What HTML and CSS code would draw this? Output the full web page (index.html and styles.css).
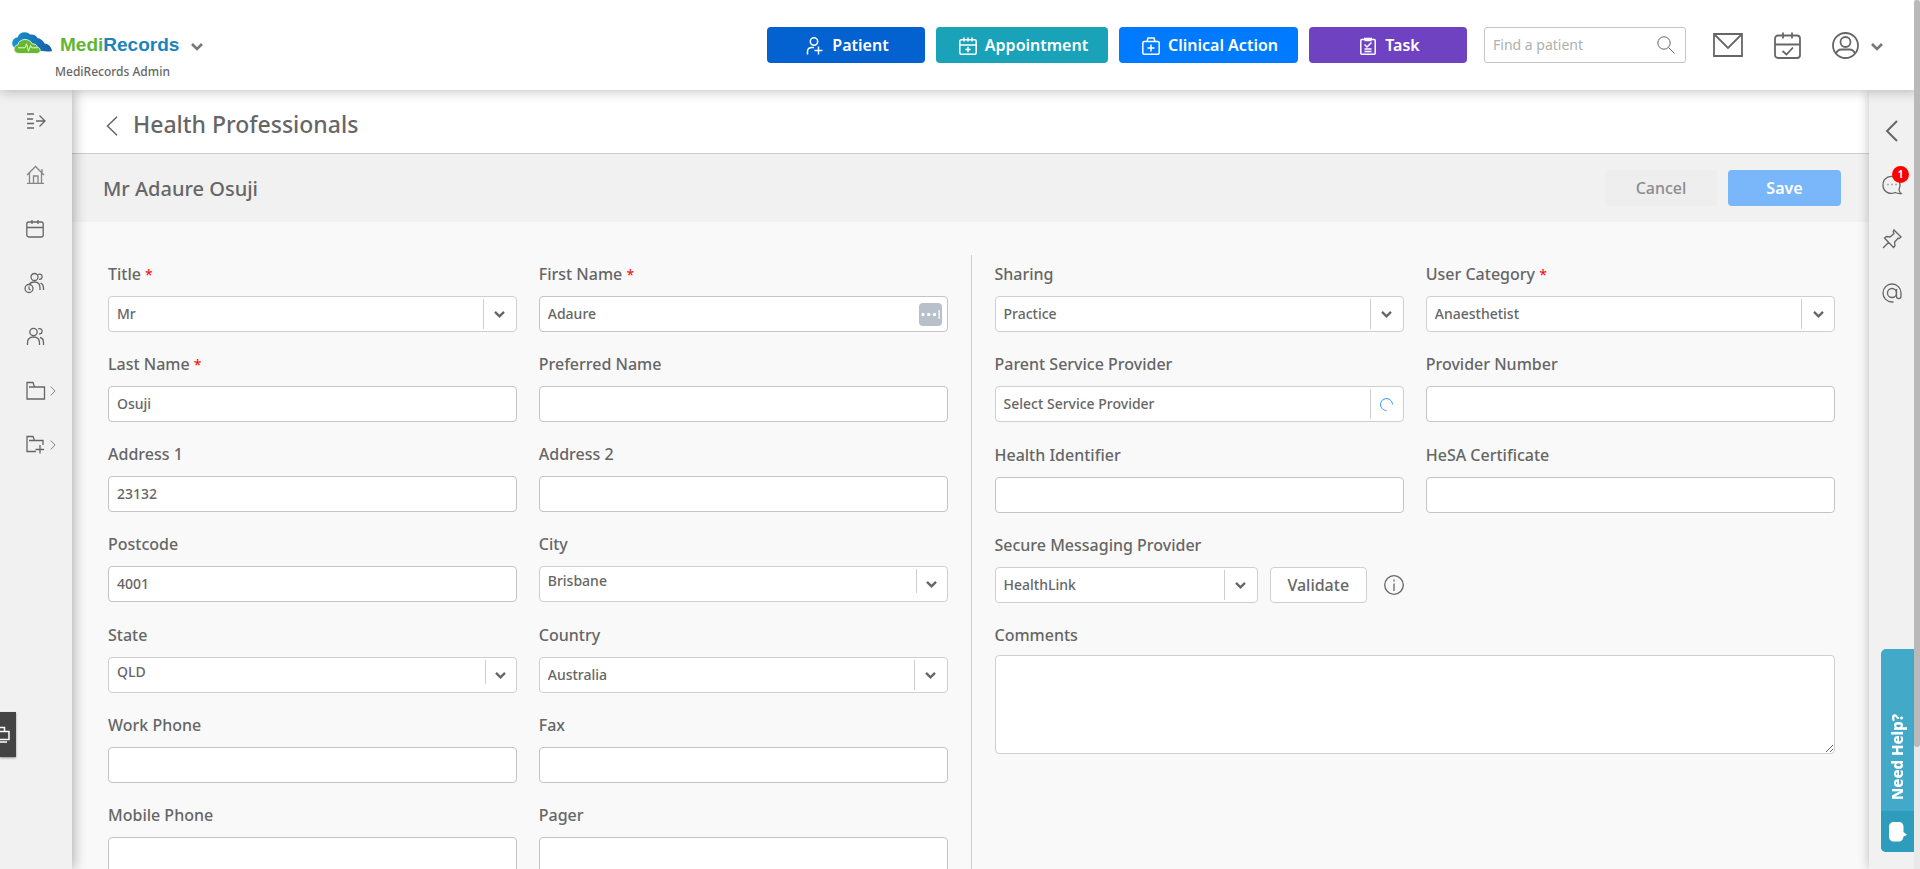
FILE: index.html
```html
<!DOCTYPE html>
<html lang="en">
<head>
  <meta charset="UTF-8" />
  <meta name="viewport" content="width=device-width, initial-scale=1.0"/>
  <title>MediRecords - Health Professionals</title>
  <link rel="stylesheet" href="styles.css">
</head>
<body>

  <!-- Shared icons -->
  <svg class="icon-defs" aria-hidden="true">
    <symbol id="chevron" viewBox="0 0 14 10"><path d="M2 2l5 5 5-5" fill="none" stroke="currentColor" stroke-width="2.6"/></symbol>
    <symbol id="arrow-right" viewBox="0 0 6 12"><path d="M.7 1.500L5 6 .7 10.500" fill="none" stroke="currentColor" stroke-width="1"/></symbol>
  </svg>

  <div class="app">
    <header class="topbar">
      <div class="brand">
        <button class="brand-name" type="button">
          <svg class="logo" viewBox="0 0 40 22" aria-hidden="true">
            <defs>
              <linearGradient id="cloudBlue" x1="0" x2="1"><stop offset="0" stop-color="#1793d1"/><stop offset="1" stop-color="#145fa5"/></linearGradient>
            </defs>
            <path d="M6 17C1 16 0 13 .3 10.500 .6 7.500 3 5.500 5.500 5.500 6.500 2 9.500.3 12.500.3c2.500 0 4 .8 5.500 2.200 3-.5 6 .5 7.500 3.500 3.500.8 5.500 2.500 7 5.500 4 .3 7 3.500 7.500 7.500-3 .8-7 .5-10 0z" fill="url(#cloudBlue)"/>
            <path d="M7 21.500c-3 0-5-1.800-5-4.300 0-2.300 1.600-4 3.800-4.300C6.500 9.500 9.500 7.500 13 7.500c3.300 0 6 1.600 7.200 4.400 2.800-.3 4.600 1 5 3.300 1.800.2 3 1.500 3 3.200 0 2-1.400 3.100-3.500 3.100z" fill="#67b72f" stroke="#fff" stroke-width=".8"/>
            <path d="M6 15.800h7l1.500-4 2 7.500 2-6 1.200 2.500H26" fill="none" stroke="#e8f7dc" stroke-width="1"/>
          </svg>
          <span><span class="medi">Medi</span><span class="records">Records</span></span>
          <svg class="caret" aria-hidden="true"><use href="#chevron"/></svg>
        </button>
        <div class="brand-sub">MediRecords Admin</div>
      </div>

      <div class="actions">
        <button class="btn btn-patient" type="button">
          <svg viewBox="0 0 18 18" aria-hidden="true"><circle cx="8" cy="4.500" r="3.700"/><path d="M1.500 17.500v-3c0-2.500 1.700-4 4.500-4h2M12.500 9.500v8M8.500 13.500h8"/></svg>
          Patient
        </button>
        <button class="btn btn-appointment" type="button">
          <svg viewBox="0 0 18 18" aria-hidden="true"><rect x=".8" y="2.800" width="16.400" height="14.500" rx="1.500"/><path d="M1 8h16M5 .5v4M9 .5v4M13 .5v4M9 9.800v5.400M6.300 12.500h5.400"/></svg>
          Appointment
        </button>
        <button class="btn btn-clinical" type="button">
          <svg viewBox="0 0 18 18" aria-hidden="true"><rect x=".8" y="4.500" width="16.400" height="12.700" rx="1.500"/><path d="M5 4.500l1-3.500h6l1 3.500M9 7.500v7M5.500 11h7"/></svg>
          Clinical Action
        </button>
        <button class="btn btn-task" type="button">
          <svg viewBox="0 0 18 18" aria-hidden="true"><rect x="1.800" y="2.500" width="14.400" height="14.700" rx="1"/><path d="M5 1.500h8M5.500 3.500h7M5.500 7.500l2.500 2.500 4.500-4.500M5.500 12h7M5.500 14.500h7"/></svg>
          Task
        </button>
      </div>

      <div class="search">
        <input type="text" placeholder="Find a patient" aria-label="Find a patient">
        <svg viewBox="0 0 18 18" aria-hidden="true"><circle cx="7" cy="7" r="6.200"/><path d="M11.500 11.500l6 6"/></svg>
      </div>

      <nav class="user-nav">
        <a href="#" aria-label="Messages">
          <svg width="30" height="24" viewBox="0 0 30 24"><path d="M1 1h28v22H1zM1.500 1.500L15 15 28.500 1.500"/></svg>
        </a>
        <a href="#" aria-label="Tasks">
          <svg width="27" height="27" viewBox="0 0 27 27"><rect x="1" y="3.500" width="25" height="22.500" rx="3"/><path d="M1 12.500h25M9 .5v6M18 .5v6M8.500 19l4 3.500 6.500-7"/></svg>
        </a>
        <a href="#" aria-label="Account" class="account">
          <svg width="27" height="27" viewBox="0 0 27 27"><circle cx="13.500" cy="13.500" r="12.500"/><circle cx="13.500" cy="10" r="5"/><path d="M4 21.500c1-2.500 3-4 5.500-4h8c2.500 0 4.500 1.500 5.500 4"/></svg>
          <svg class="caret" aria-hidden="true"><use href="#chevron"/></svg>
        </a>
      </nav>
    </header>

    <div class="body">
      <nav class="sidebar">
        <a href="#" aria-label="Expand menu">
          <svg viewBox="0 0 20 20"><path d="M1 3h7M1 8h6M1 12.500h7M1 17h7M10 10h9M13.500 4.500L19 10l-5.500 5.500"/></svg>
        </a>
        <a href="#" aria-label="Home" class="light">
          <svg viewBox="0 0 20 20"><path d="M1 10l8.500-8.500L18 10M3.500 8v10M15.500 8v10M1 18.300h17M7.500 18v-7h4.500v7M16 4v4"/></svg>
        </a>
        <a href="#" aria-label="Calendar">
          <svg viewBox="0 0 20 20"><rect x=".8" y="3" width="16.400" height="15" rx="2"/><path d="M1 8.500h16M6 1v4M12 1v4"/></svg>
        </a>
        <a href="#" aria-label="Waiting room">
          <svg viewBox="0 0 20 20"><circle cx="8.500" cy="4" r="3.500"/><path d="M12 1.500c3-1 4.500.5 4 3-.3 1.500-1.500 2-3 1.800M3 12c1-2.500 2.500-3 5.500-3s5.500 1.500 5.500 6v2M14.500 10c2 .8 3 2.500 3 5v2"/><circle class="clock" cx="3" cy="15.500" r="4"/><path d="M3 13.500v2.500l1.500 1"/></svg>
        </a>
        <a href="#" aria-label="Patients">
          <svg viewBox="0 0 20 20"><circle cx="7.500" cy="5" r="3.700"/><path d="M12 2c3-1 4.500.5 4 3-.3 1.500-1.500 2-3 1.800M1.500 18v-2c0-4 2-6 6-6s6 2 6 6v2M14 10.500c2.500.5 3.500 2.500 3.500 5V18"/></svg>
        </a>
        <a href="#" aria-label="Files">
          <svg viewBox="0 0 20 20"><path d="M1 1.500h6l1.500 4.500H18.500v12H1zM3 6h6"/></svg>
          <svg class="sub-arrow" aria-hidden="true"><use href="#arrow-right"/></svg>
        </a>
        <a href="#" aria-label="Add file">
          <svg viewBox="0 0 20 20"><path d="M10 16.500H1v-15h6L8.500 5.500H17V10M3 5.500h6M14 10v8.500M9.500 14.500h8.500"/></svg>
          <svg class="sub-arrow" aria-hidden="true"><use href="#arrow-right"/></svg>
        </a>
      </nav>

      <main class="content">
        <div class="page-title">
          <a href="#" aria-label="Back">
            <svg width="12" height="20" viewBox="0 0 12 20"><path d="M11 .8L1.500 10l9.500 9.200"/></svg>
          </a>
          <h1>Health Professionals</h1>
        </div>
        <div class="page-bar">
          <h2>Mr Adaure Osuji</h2>
          <button class="btn btn-cancel" type="button">Cancel</button>
          <button class="btn btn-save" type="button">Save</button>
        </div>

        <form class="form">
          <div class="panel panel-left">
            <div class="field">
              <label for="title">Title <span class="req">*</span></label>
              <div class="select">
                <select id="title"><option>Mr</option></select>
                <span class="select-arrow"><svg><use href="#chevron"/></svg></span>
              </div>
            </div>
            <div class="field">
              <label for="firstName">First Name <span class="req">*</span></label>
              <div class="with-icon">
                <input type="text" id="firstName" value="Adaure">
                <svg class="autofill" viewBox="0 0 23 23" aria-hidden="true"><rect width="23" height="23" rx="4" fill="#b8c0cb"/><g fill="#fff"><circle cx="4" cy="11.500" r="1.700"/><circle cx="9.700" cy="11.500" r="1.700"/><circle cx="15.400" cy="11.500" r="1.700"/><rect x="19.500" y="7" width="1.300" height="9"/></g></svg>
              </div>
            </div>
            <div class="field">
              <label for="lastName">Last Name <span class="req">*</span></label>
              <input type="text" id="lastName" value="Osuji">
            </div>
            <div class="field">
              <label for="preferredName">Preferred Name</label>
              <input type="text" id="preferredName">
            </div>
            <div class="field">
              <label for="address1">Address 1</label>
              <input type="text" id="address1" value="23132">
            </div>
            <div class="field">
              <label for="address2">Address 2</label>
              <input type="text" id="address2">
            </div>
            <div class="field">
              <label for="postcode">Postcode</label>
              <input type="text" id="postcode" value="4001">
            </div>
            <div class="field field-async">
              <label for="city">City</label>
              <div class="select combo">
                <select id="city"><option>Brisbane</option></select>
                <span class="select-arrow"><svg><use href="#chevron"/></svg></span>
              </div>
            </div>
            <div class="field">
              <label for="state">State</label>
              <div class="select combo">
                <select id="state"><option>QLD</option></select>
                <span class="select-arrow"><svg><use href="#chevron"/></svg></span>
              </div>
            </div>
            <div class="field">
              <label for="country">Country</label>
              <div class="select">
                <select id="country"><option>Australia</option></select>
                <span class="select-arrow"><svg><use href="#chevron"/></svg></span>
              </div>
            </div>
            <div class="field">
              <label for="workPhone">Work Phone</label>
              <input type="text" id="workPhone">
            </div>
            <div class="field">
              <label for="fax">Fax</label>
              <input type="text" id="fax">
            </div>
            <div class="field">
              <label for="mobilePhone">Mobile Phone</label>
              <input type="text" id="mobilePhone">
            </div>
            <div class="field">
              <label for="pager">Pager</label>
              <input type="text" id="pager">
            </div>
          </div>

          <div class="panel panel-right">
            <div class="field">
              <label for="sharing">Sharing</label>
              <div class="select">
                <select id="sharing"><option>Practice</option></select>
                <span class="select-arrow"><svg><use href="#chevron"/></svg></span>
              </div>
            </div>
            <div class="field">
              <label for="category">User Category <span class="req">*</span></label>
              <div class="select">
                <select id="category"><option>Anaesthetist</option></select>
                <span class="select-arrow"><svg><use href="#chevron"/></svg></span>
              </div>
            </div>
            <div class="field field-async">
              <label for="parentProvider">Parent Service Provider</label>
              <div class="select">
                <select id="parentProvider"><option>Select Service Provider</option></select>
                <span class="select-arrow"><span class="spinner"></span></span>
              </div>
            </div>
            <div class="field">
              <label for="providerNumber">Provider Number</label>
              <input type="text" id="providerNumber">
            </div>
            <div class="field">
              <label for="healthId">Health Identifier</label>
              <input type="text" id="healthId">
            </div>
            <div class="field">
              <label for="hesa">HeSA Certificate</label>
              <input type="text" id="hesa">
            </div>
            <div class="field field-first">
              <label for="messaging">Secure Messaging Provider</label>
              <div class="inline">
                <div class="select">
                  <select id="messaging"><option>HealthLink</option></select>
                  <span class="select-arrow"><svg><use href="#chevron"/></svg></span>
                </div>
                <button class="btn btn-validate" type="button">Validate</button>
                <svg class="info" viewBox="0 0 20 20" aria-hidden="true"><circle cx="10" cy="10" r="9.300"/><path d="M10 8.500V16M10 4.500v2"/></svg>
              </div>
            </div>
            <div class="field field-wide">
              <label for="comments">Comments</label>
              <textarea id="comments"></textarea>
            </div>
          </div>
        </form>
      </main>

      <nav class="rightbar">
        <a href="#" aria-label="Open panel" class="open-panel">
          <svg viewBox="0 0 20 20"><path d="M15 0L5 10l10 10"/></svg>
        </a>
        <a href="#" aria-label="Chat" class="chat">
          <svg viewBox="0 0 20 20"><path d="M17 14.500c2.200-5 .5-9-2.500-11.500C9.500-.5 1 2 1 10c0 7 7 10 12 7.500 2 .8 4 1.200 6 1-1-.8-1.800-2.200-2-4z"/><path d="M5.500 9.500h1M9.500 9.500h1M13.500 9.500h1"/></svg>
          <span class="badge">1</span>
        </a>
        <a href="#" aria-label="Pinned">
          <svg viewBox="0 0 20 20"><path d="M12 1l7 7-2 1.500-1-.2-3.500 4 .5 3.500-1.500 1.700-9-9.500L4.500 7.500 8 8l4-3.500-.8-1.700zM7 13l-6 6"/></svg>
        </a>
        <a href="#" aria-label="Mentions">
          <svg viewBox="0 0 20 20"><circle cx="10" cy="10" r="4.500"/><path d="M14.500 6v7c0 3.500 4.500 3.500 4.500 0v-3c0-5-4-9-9-9s-9 4-9 9 4 9 9 9h1.500"/></svg>
        </a>
      </nav>

      <div class="scrollbar"><div class="scroll-thumb"></div></div>
    </div>
  </div>

  <button class="side-tab" type="button" aria-label="Screen share">
    <svg width="10" height="18" viewBox="0 0 10 18"><path d="M0 1.500h4.500V5M0 5.500h9v8H0M0 16h7" /></svg>
  </button>

  <button class="help" type="button">
    <span class="help-text">Need Help?</span>
    <span class="help-icon"><svg width="18" height="20" viewBox="0 0 18 20"><path d="M5 0h5c3 0 4.500 2 4.500 5v5l3.500 3-3.500 1.500C14 18 12.500 19.500 10 19.500H5c-3 0-5-2-5-5V5c0-3 2-5 5-5z" fill="#fff"/></svg></span>
  </button>

</body>
</html>
```

FILE: styles.css
```css
:root {
  --text: #666;
  --border: #c4c4c4;
  --border-light: #cfcfcf;
  --bar-bg: #f1f1f1;
  --page-bg: #f9f9f9;
}

* {
  box-sizing: border-box;
}

body {
  margin: 0;
  font-family: "Noto Sans", "Open Sans", sans-serif;
  font-size: 16px;
  font-weight: 500;
  color: var(--text);
  background: var(--page-bg);
  overflow: hidden;
}

button,
input,
select,
textarea {
  font: inherit;
  color: inherit;
}

button {
  cursor: pointer;
}

a {
  color: inherit;
  text-decoration: none;
}

svg {
  fill: none;
  stroke: currentColor;
  flex: none;
}

.icon-defs {
  display: none;
}

.caret {
  width: 14px;
  height: 10px;
  margin-top: 4px;
  color: #777;
  stroke: none;
}

.app {
  display: flex;
  flex-direction: column;
  height: 100vh;
}

/* Top bar */
.topbar {
  display: flex;
  align-items: flex-start;
  height: 90px;
  padding: 27px 36px 0 12px;
  background: white;
  box-shadow: 0 1px 12px rgba(0, 0, 0, 0.25);
  position: relative;
  z-index: 3;
}

.brand {
  margin-right: auto;
}

.brand-name {
  display: flex;
  align-items: center;
  height: 36px;
  padding: 0;
  border: 0;
  background: none;
  font-family: "Liberation Sans", Arial, sans-serif;
  font-size: 19px;
  font-weight: bold;
}

.logo {
  width: 40px;
  height: 22px;
  margin-right: 8px;
  margin-bottom: 4px;
  stroke: none;
}

.brand-name .caret {
  margin-left: 11px;
}

.medi {
  color: #62b62f;
}

.records {
  color: #1c84bd;
}

.brand-sub {
  padding-left: 43px;
  font-size: 12px;
  line-height: 18px;
}

.btn {
  display: flex;
  align-items: center;
  justify-content: center;
  height: 36px;
  padding: 0;
  border: 0;
  border-radius: 4px;
}

.actions {
  display: flex;
  gap: 11px;
  margin-right: 17px;
}

.actions .btn {
  gap: 8px;
  padding-left: 3px;
  color: white;
  font-weight: 600;
}

.actions svg {
  width: 18px;
  height: 18px;
  margin-top: 2px;
  stroke-width: 1.5;
}

.btn-patient {
  width: 158px;
  background: #0362d0;
}

.btn-appointment {
  width: 172px;
  background: #19a2b8;
}

.btn-clinical {
  width: 179px;
  background: #007bff;
}

.btn-task {
  width: 158px;
  background: #6f42c1;
}

.search {
  display: flex;
  align-items: center;
  width: 202px;
  height: 36px;
  padding-right: 10px;
  margin-right: 27px;
  border: 1px solid var(--border);
  border-radius: 3px;
}

.search input {
  flex: 1;
  min-width: 0;
  padding: 0 8px 2px;
  border: 0;
  outline: 0;
  background: none;
  font-size: 14px;
  font-weight: 400;
}

.search input::placeholder {
  color: #b0b0b0;
}

.search svg {
  width: 18px;
  height: 18px;
}

.user-nav {
  display: flex;
  align-items: center;
  gap: 31px;
  height: 36px;
}

.user-nav a {
  display: flex;
  align-items: center;
}

.user-nav svg {
  stroke-width: 1.8;
}

.user-nav .account {
  gap: 11px;
}

.user-nav .caret {
  stroke: none;
}

.body {
  display: flex;
  flex: 1;
  min-height: 0;
}

/* Left and right icon bars */
.sidebar,
.rightbar {
  display: flex;
  flex-direction: column;
  background: var(--bar-bg);
  z-index: 2;
}

.sidebar {
  width: 72px;
  padding-top: 4px;
  box-shadow: 2px 0 12px rgba(0, 0, 0, 0.3);
}

.rightbar {
  width: 45px;
  padding-top: 14px;
  box-shadow: 0 0 10px rgba(0, 0, 0, 0.25);
}

.sidebar a,
.rightbar a {
  display: flex;
  align-items: center;
  height: 54px;
}

.sidebar a {
  gap: 4px;
  padding-left: 26px;
}

.rightbar a {
  justify-content: center;
  position: relative;
}

.sidebar svg,
.rightbar svg {
  width: 20px;
  height: 20px;
  stroke-width: 1.3;
  overflow: visible;
}

.sidebar .light {
  color: #858585;
}

.sidebar .clock {
  fill: var(--bar-bg);
}

.sidebar .sub-arrow {
  width: 6px;
  height: 12px;
  color: #858585;
}

.rightbar .open-panel svg {
  stroke-width: 2;
}

.badge {
  position: absolute;
  top: 8px;
  right: 5px;
  width: 17px;
  height: 17px;
  border-radius: 50%;
  background: #f00;
  color: white;
  font-size: 10px;
  font-weight: 700;
  line-height: 16px;
  text-align: center;
}

.scrollbar {
  width: 6px;
  margin-top: -90px;
  background: #e9e9e9;
  z-index: 4;
}

.scroll-thumb {
  height: 86%;
  border-radius: 3px;
  background: #b9b9b9;
}

/* Page content */
.content {
  flex: 1;
  min-width: 0;
  overflow: hidden;
}

.page-title {
  display: flex;
  align-items: center;
  gap: 15px;
  height: 64px;
  padding: 0 34px;
  border-bottom: 1px solid #ccc;
  background: white;
}

.page-title a {
  display: flex;
  padding-top: 8px;
}

.page-title svg {
  stroke-width: 1.5;
}

.page-title h1 {
  margin: 0;
  padding-top: 4px;
  font-size: 23px;
  font-weight: 500;
}

.page-bar {
  display: flex;
  align-items: center;
  gap: 11px;
  height: 68px;
  padding: 0 28px 0 31px;
  background: var(--bar-bg);
}

.page-bar h2 {
  margin: 0 auto 0 0;
  font-size: 20px;
  font-weight: 500;
}

.btn-cancel {
  width: 112px;
  background: #eee;
  color: #8c8c8c;
}

.btn-save {
  width: 113px;
  background: #7ab6fa;
  color: white;
  font-weight: 600;
}

.form {
  display: grid;
  grid-template-columns: 1fr 1fr;
  padding: 33px 34px 0 36px;
}

.panel {
  display: grid;
  grid-template-columns: 1fr 1fr;
  align-content: start;
  column-gap: 22px;
  padding-top: 7px;
}

.panel-left {
  padding-right: 23px;
  border-right: 1px solid var(--border-light);
}

.panel-right {
  padding-left: 23px;
}

.field {
  display: flex;
  flex-direction: column;
  gap: 10px;
  min-width: 0;
  padding-bottom: 20px;
}

.field label {
  line-height: 24px;
}

.field-async {
  padding-bottom: 21px;
}

.field-first {
  grid-column: 1;
}

.field-wide {
  grid-column: 1 / -1;
  gap: 8px;
}

.req {
  color: #f00;
  font-size: 14px;
  font-weight: 400;
  line-height: 1;
}

.field input,
.field textarea {
  width: 100%;
  height: 36px;
  padding: 0 8px 2px;
  border: 1px solid var(--border);
  border-radius: 4px;
  background: white;
  font-size: 14px;
}

.field textarea {
  display: block;
  height: 99px;
  border-color: var(--border-light);
}

/* Select with its own divider and arrow */
.select,
.with-icon {
  display: grid;
  align-items: center;
}

.select {
  height: 36px;
  border: 1px solid var(--border-light);
  border-radius: 4px;
  background: white;
}

.select > *,
.with-icon > * {
  grid-area: 1 / 1;
}

.select select {
  width: 100%;
  height: 34px;
  padding: 0 40px 2px 8px;
  border: 0;
  background: none;
  appearance: none;
  font-size: 14px;
}

.select-arrow {
  display: flex;
  align-items: center;
  justify-content: center;
  justify-self: end;
  width: 33px;
  height: 30px;
  border-left: 1px solid var(--border-light);
  pointer-events: none;
}

.select-arrow svg {
  width: 13px;
  height: 9px;
  stroke: none;
}

.combo select {
  padding-bottom: 8px;
}

.combo .select-arrow {
  align-self: start;
  align-items: flex-end;
  width: 31px;
  height: 24px;
  margin-top: 2px;
  padding-bottom: 4px;
}

.spinner {
  width: 13px;
  height: 13px;
  border: 1px solid #3b99fc;
  border-bottom-color: transparent;
  border-radius: 50%;
  transform: rotate(-45deg);
}

.autofill {
  justify-self: end;
  width: 23px;
  height: 23px;
  margin-right: 6px;
  stroke: none;
}

.inline {
  display: flex;
  align-items: center;
}

.inline .select {
  flex: 1;
}

.btn-validate {
  width: 97px;
  margin: 0 17px 0 12px;
  border: 1px solid var(--border-light);
  background: white;
}

.info {
  width: 20px;
  height: 20px;
  stroke-width: 1.3;
}

/* Floating widgets */
.side-tab {
  position: fixed;
  left: 0;
  top: 712px;
  width: 16px;
  height: 45px;
  padding: 0;
  border: 0;
  background: #444;
  color: white;
  text-align: left;
  box-shadow: 0 1px 2px rgba(0, 0, 0, 0.4);
  z-index: 5;
}

.side-tab svg {
  display: block;
  stroke-width: 1.5;
}

.help {
  display: flex;
  flex-direction: column;
  position: fixed;
  right: 6px;
  bottom: 17px;
  width: 33px;
  height: 203px;
  padding: 0;
  border: 0;
  border-radius: 5px 0 0 5px;
  background: #42a9c9;
  color: white;
  overflow: hidden;
  z-index: 5;
}

.help-text {
  flex: 1;
  width: 33px;
  padding-top: 11px;
  font-size: 15px;
  font-weight: 800;
  line-height: 33px;
  text-align: left;
  writing-mode: vertical-rl;
  transform: rotate(180deg);
}

.help-icon {
  display: flex;
  align-items: center;
  justify-content: center;
  width: 33px;
  height: 41px;
  background: #2e9cbc;
}

.help-icon svg {
  stroke: none;
}
```
